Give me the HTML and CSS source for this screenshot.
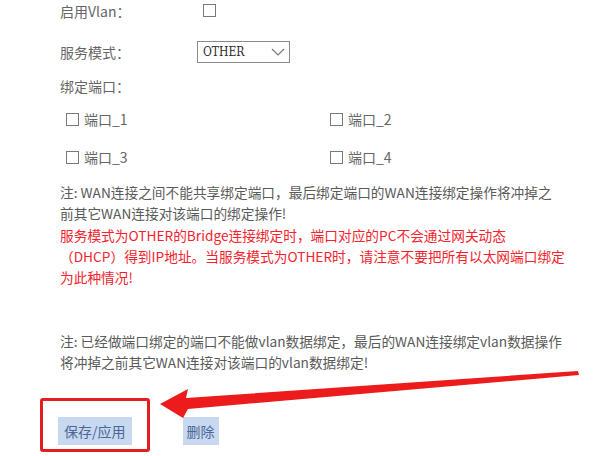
FILE: index.html
```html
<!DOCTYPE html>
<html lang="zh-CN">
<head>
    <meta charset="UTF-8">
    <meta name="viewport" content="width=device-width, initial-scale=1.0">
    <title>WAN 连接设置</title>
    <link rel="stylesheet" href="styles.css">
</head>
<body>
    <div class="page">
        <div class="row row-vlan">
            <span class="label">启用Vlan：</span>
            <input type="checkbox" class="check vlan-check">
        </div>
        <div class="row row-mode">
            <span class="label">服务模式：</span>
            <span class="select-wrap">
                <select class="select">
                    <option>OTHER</option>
                </select>
                <svg class="chevron" width="14" height="8" viewBox="0 0 14 8">
                    <path d="M1 1 L7 7 L13 1" fill="none" stroke="#777" stroke-width="1.2"/>
                </svg>
            </span>
        </div>
        <div class="row row-bind">
            <span class="label">绑定端口：</span>
        </div>
        <div class="ports">
            <label class="port"><input type="checkbox" class="check">端口_1</label>
            <label class="port"><input type="checkbox" class="check">端口_2</label>
            <label class="port"><input type="checkbox" class="check">端口_3</label>
            <label class="port"><input type="checkbox" class="check">端口_4</label>
        </div>
        <p class="note">注: WAN连接之间不能共享绑定端口，最后绑定端口的WAN连接绑定操作将冲掉之<br>前其它WAN连接对该端口的绑定操作!</p>
        <p class="note warn">服务模式为OTHER的Bridge连接绑定时，端口对应的PC不会通过网关动态<br>（DHCP）得到IP地址。当服务模式为OTHER时，请注意不要把所有以太网端口绑定<br>为此种情况!</p>
        <p class="note note-vlan">注: 已经做端口绑定的端口不能做vlan数据绑定，最后的WAN连接绑定vlan数据操作<br>将冲掉之前其它WAN连接对该端口的vlan数据绑定!</p>
        <div class="buttons">
            <button class="btn btn-save">保存/应用</button>
            <button class="btn btn-del">删除</button>
        </div>
    </div>

    <!-- annotation: red box and arrow pointing at the save button -->
    <div class="mark-box"></div>
    <svg class="mark-arrow" width="600" height="456" viewBox="0 0 600 456">
        <polygon points="160,404 188,389 186,398 578,371 579,375 188,409 183,418" fill="#ec1c1c"/>
    </svg>
</body>
</html>
```

FILE: styles.css
```css
body {
    margin: 0;
    background-color: #ffffff;
    font-family: "Noto Sans CJK SC", "Noto Sans", sans-serif;
    font-size: 14px;
    color: #666666;
    position: relative;
    width: 600px;
    height: 456px;
    overflow: hidden;
}
.page {
    padding-left: 60px;
}
.row {
    display: flex;
    align-items: center;
    height: 22px;
}
.row-mode {
    margin-top: 19px;
}
.row-bind {
    margin-top: 12px;
}
.label {
    width: 137px;
    flex-shrink: 0;
}
.check {
    appearance: none;
    -webkit-appearance: none;
    width: 13px;
    height: 13px;
    margin: 0 5px 0 0;
    border: 1px solid #7a7a7a;
    background: #ffffff;
    box-sizing: border-box;
}
.vlan-check {
    margin-left: 6px;
    margin-top: -2px;
}
.select-wrap {
    position: relative;
    display: inline-block;
}
.select {
    appearance: none;
    -webkit-appearance: none;
    width: 93px;
    height: 22px;
    border: 1px solid #8a8a8a;
    border-radius: 0;
    background: #ffffff;
    padding: 0 0 0 5px;
    font-family: "DejaVu Serif Condensed", "Liberation Serif", serif;
    font-size: 12px;
    color: #2a2a2a;
    display: block;
}
.chevron {
    position: absolute;
    right: 5px;
    top: 7px;
    pointer-events: none;
}
.ports {
    display: grid;
    grid-template-columns: 264px 200px;
    row-gap: 16px;
    padding-left: 6px;
    margin-top: 11px;
}
.port {
    display: flex;
    align-items: center;
    height: 22px;
}
.note {
    margin: 14px 0 0 0;
    line-height: 21px;
    font-size: 13.7px;
    color: #5a5a5a;
    white-space: nowrap;
}
.warn {
    margin-top: 1px;
    color: #f5232d;
}
.note-vlan {
    margin-top: 43px;
}
.buttons {
    display: flex;
    gap: 51px;
    margin-top: 44px;
    margin-left: -2px;
}
.btn {
    height: 28px;
    border: none;
    background-color: #c8d8f0;
    color: #4a6796;
    font-family: "Noto Sans CJK SC", sans-serif;
    font-size: 14px;
    padding: 0 6px;
}
.btn-del {
    padding: 0 4px;
}
.mark-box {
    position: absolute;
    left: 40px;
    top: 398px;
    width: 110px;
    height: 54px;
    border: 3px solid #e31e1e;
    border-radius: 3px;
    box-sizing: border-box;
}
.mark-arrow {
    position: absolute;
    left: 0;
    top: 0;
    pointer-events: none;
}
```
